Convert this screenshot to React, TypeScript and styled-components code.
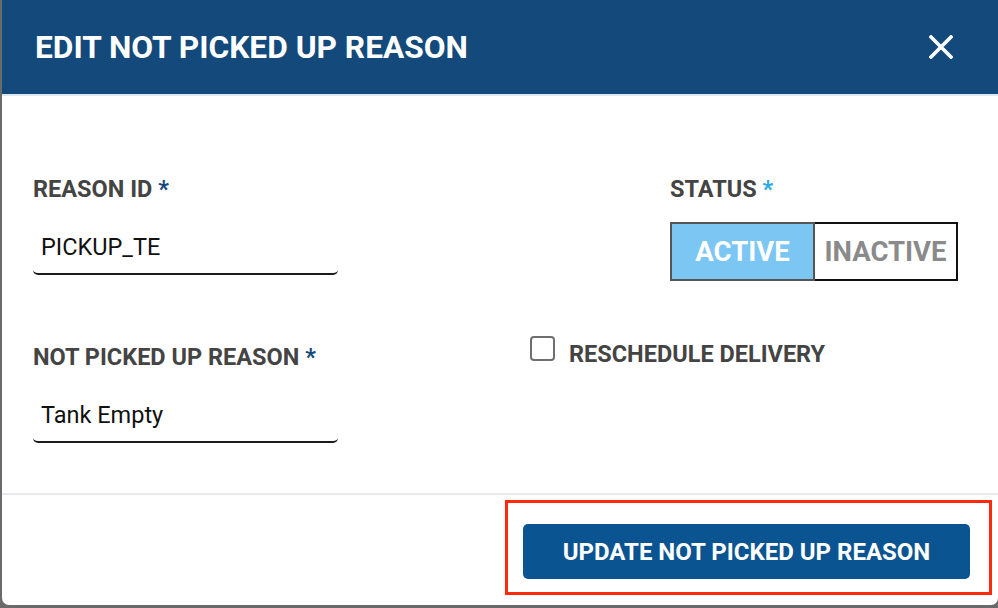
import React, { useState } from 'react';
import styled, { createGlobalStyle } from 'styled-components';

const GlobalStyle = createGlobalStyle`
    html, body {
        margin: 0;
        padding: 0;
        background: #6a6a6a;
    }
    body {
        font-family: Roboto, 'Liberation Sans', Arial, sans-serif;
    }
    * {
        box-sizing: border-box;
    }
`;

type Status = 'ACTIVE' | 'INACTIVE';

const App: React.FC = () => {
    const [reasonId, setReasonId] = useState('PICKUP_TE');
    const [reason, setReason] = useState('Tank Empty');
    const [status, setStatus] = useState<Status>('ACTIVE');
    const [reschedule, setReschedule] = useState(false);

    return (
        <>
            <GlobalStyle />
            <Page>
                <Dialog>
                    <Header>
                        <Title>EDIT NOT PICKED UP REASON</Title>
                        <CloseButton aria-label='Close'>
                            <svg width='24' height='24' viewBox='0 0 24 24'>
                                <path d='M2 2 L22 22 M22 2 L2 22' stroke='#fff' strokeWidth='3.6' strokeLinecap='square' />
                            </svg>
                        </CloseButton>
                    </Header>
                    <Body>
                        <FormGrid>
                            <Field>
                                <Label>
                                    REASON ID <Required>*</Required>
                                </Label>
                                <TextInput value={reasonId} onChange={(e) => setReasonId(e.target.value)} />
                            </Field>
                            <StatusField>
                                <Label>
                                    STATUS <Required light>*</Required>
                                </Label>
                                <Toggle>
                                    <ToggleButton selected={status === 'ACTIVE'} onClick={() => setStatus('ACTIVE')}>
                                        ACTIVE
                                    </ToggleButton>
                                    <ToggleButton selected={status === 'INACTIVE'} onClick={() => setStatus('INACTIVE')}>
                                        INACTIVE
                                    </ToggleButton>
                                </Toggle>
                            </StatusField>
                            <Field>
                                <Label>
                                    NOT PICKED UP REASON <Required>*</Required>
                                </Label>
                                <TextInput value={reason} onChange={(e) => setReason(e.target.value)} />
                            </Field>
                            <CheckRow onClick={() => setReschedule((v) => !v)}>
                                <CheckBox checked={reschedule}>
                                    {reschedule && (
                                        <svg width='17' height='17' viewBox='0 0 17 17'>
                                            <path d='M3 9 L7 13 L14 4' stroke='#fff' strokeWidth='2.4' fill='none' />
                                        </svg>
                                    )}
                                </CheckBox>
                                <CheckLabel>RESCHEDULE DELIVERY</CheckLabel>
                            </CheckRow>
                        </FormGrid>
                    </Body>
                    <Footer>
                        <Highlight>
                            <PrimaryButton>UPDATE NOT PICKED UP REASON</PrimaryButton>
                        </Highlight>
                    </Footer>
                </Dialog>
            </Page>
        </>
    );
};

const Page = styled.div`
    width: 998px;
    height: 608px;
    padding-left: 2px;
    overflow: hidden;
`;

const Dialog = styled.div`
    width: 996px;
    height: 605px;
    background: #ffffff;
    border-radius: 0 0 7px 7px;
    display: flex;
    flex-direction: column;
    overflow: hidden;
`;

const Header = styled.div`
    height: 96px;
    flex-shrink: 0;
    background: #13497b;
    border-bottom: 2px solid #dfe7ef;
    display: flex;
    align-items: center;
    justify-content: space-between;
    padding: 0 45px 0 33px;
`;

const Title = styled.h1`
    margin: 0;
    color: #ffffff;
    font-family: Roboto, 'Liberation Sans', sans-serif;
    font-size: 31.7px;
    font-weight: 700;
`;

const CloseButton = styled.button`
    border: none;
    background: transparent;
    padding: 0;
    width: 24px;
    height: 24px;
    cursor: pointer;
    display: flex;
`;

const Body = styled.div`
    flex: 1;
    padding: 80px 31px 0;
`;

const FormGrid = styled.div`
    display: grid;
    grid-template-columns: 497px 140px 1fr;
    row-gap: 63px;
    align-items: start;
`;

const Field = styled.div`
    grid-column: 1;
    width: 305px;
    display: flex;
    flex-direction: column;
    gap: 26px;
`;

const StatusField = styled.div`
    grid-column: 3;
    display: flex;
    flex-direction: column;
    gap: 19px;
`;

const Label = styled.label`
    font-family: Roboto, 'Liberation Sans', sans-serif;
    font-size: 23.5px;
    font-weight: 700;
    line-height: 27px;
    color: #444444;
`;

const Required = styled.span<{ light?: boolean }>`
    color: ${(props) => (props.light ? '#2aa7e4' : '#14497c')};
`;

const TextInput = styled.input`
    width: 100%;
    height: 46px;
    border: none;
    border-bottom: 2px solid #1c1c1c;
    border-radius: 0 0 5px 5px;
    padding: 0 8px 8px;
    font-family: Roboto, 'Liberation Sans', sans-serif;
    font-size: 23.5px;
    color: #111111;
    background: transparent;
    outline: none;
`;

const Toggle = styled.div`
    display: flex;
`;

const ToggleButton = styled.button<{ selected?: boolean }>`
    height: 59px;
    width: ${(props) => (props.selected ? '145px' : '143px')};
    padding: 0;
    font-family: Roboto, 'Liberation Sans', sans-serif;
    font-size: 27.5px;
    font-weight: 700;
    cursor: pointer;
    border: 2px solid ${(props) => (props.selected ? '#555555' : '#111111')};
    border-left-width: ${(props) => (props.selected ? '2px' : '0')};
    background: ${(props) => (props.selected ? '#7bc6f2' : '#ffffff')};
    color: ${(props) => (props.selected ? '#ffffff' : '#8a8a8a')};
`;

const CheckRow = styled.div`
    grid-column: 2 / 4;
    display: flex;
    align-items: flex-start;
    gap: 14px;
    margin-top: -8px;
    cursor: pointer;
`;

const CheckBox = styled.div<{ checked?: boolean }>`
    width: 25px;
    height: 25px;
    border: 2px solid #6f6f6f;
    border-radius: 4px;
    background: ${(props) => (props.checked ? '#0a5591' : '#ffffff')};
    display: flex;
    align-items: center;
    justify-content: center;
`;

const CheckLabel = styled.span`
    font-family: Roboto, 'Liberation Sans', sans-serif;
    font-size: 23.5px;
    font-weight: 700;
    line-height: 27px;
    color: #444444;
    margin-top: 5px;
`;

const Footer = styled.div`
    height: 112px;
    flex-shrink: 0;
    border-top: 2px solid #e8e8ee;
    display: flex;
    justify-content: flex-end;
    align-items: flex-start;
    padding: 5px 6px 0 0;
`;

const Highlight = styled.div`
    border: 3px solid #ff2a0a;
    padding: 21px 19px 13px 15px;
`;

const PrimaryButton = styled.button`
    width: 447px;
    height: 55px;
    border: none;
    border-radius: 5px;
    background: #0a5591;
    color: #ffffff;
    font-family: Roboto, 'Liberation Sans', sans-serif;
    font-size: 24px;
    font-weight: 700;
    cursor: pointer;
`;

export default App;
